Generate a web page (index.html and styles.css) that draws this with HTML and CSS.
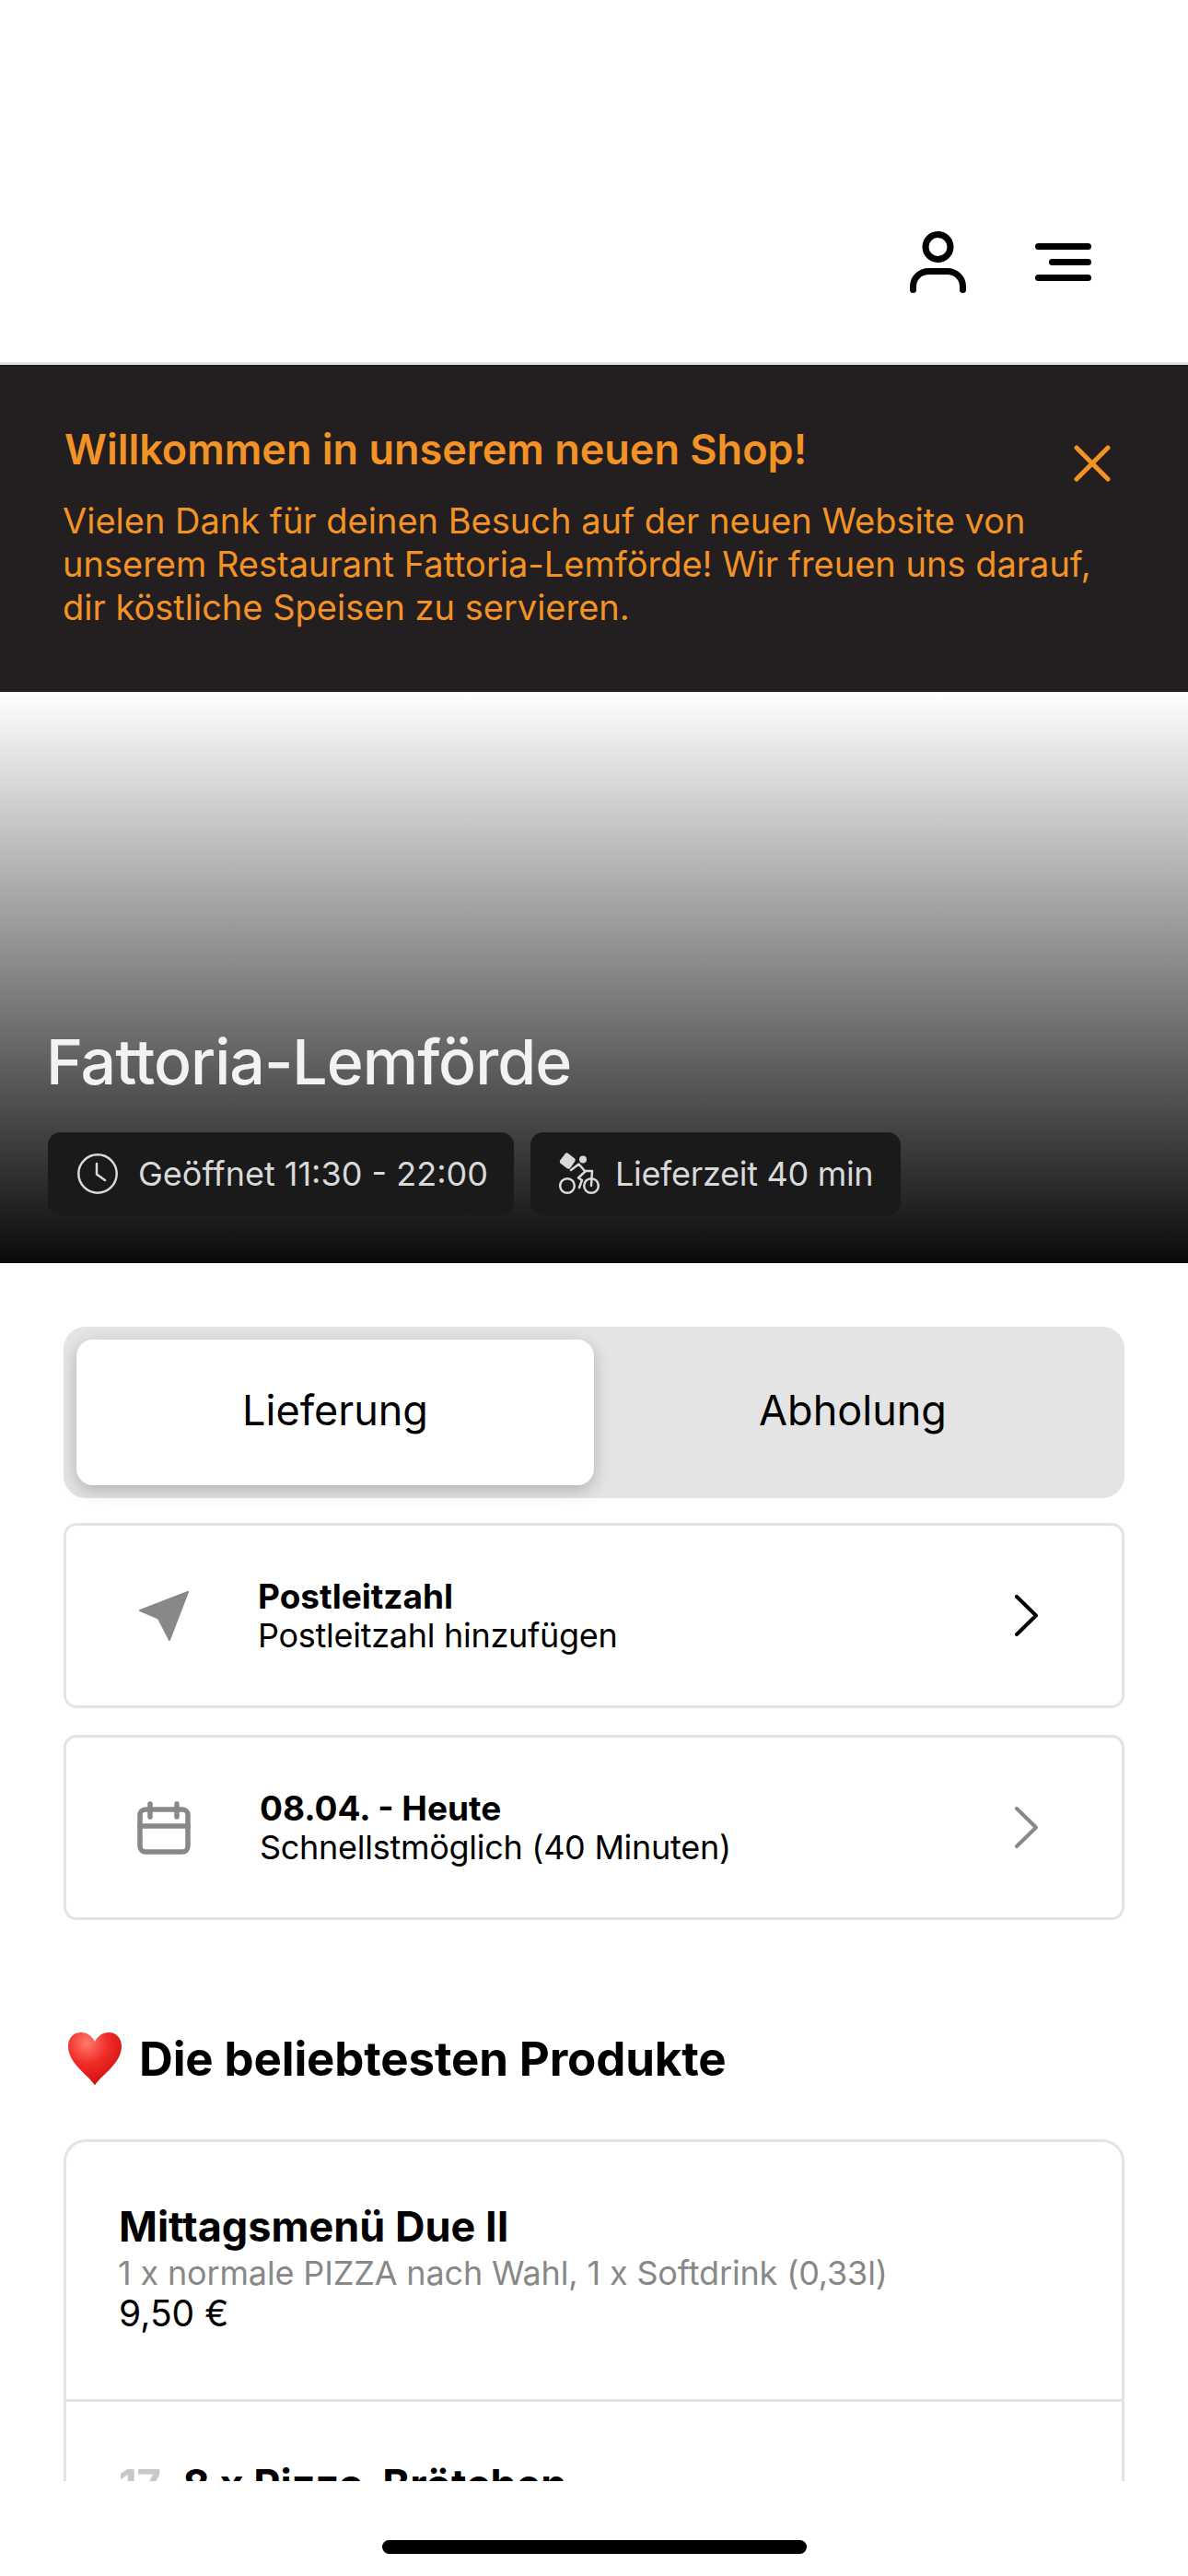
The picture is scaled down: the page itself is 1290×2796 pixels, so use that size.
FILE: index.html
```html
<!DOCTYPE html>
<html lang="de">
<head>
<meta charset="utf-8">
<title>Fattoria-Lemförde</title>
<link rel="stylesheet" href="styles.css">
</head>
<body>
<div class="page">
  <div class="viewport">
    <header class="topbar">
      <svg class="icon-user" viewBox="0 0 61 67" fill="none" stroke="#000" stroke-width="7" stroke-linecap="round"><circle cx="30.500" cy="17" r="13.500"/><path d="M3.500 63.500V60C3.500 50.600 11 43.500 20.500 43.500H40.500C50 43.500 57.500 50.600 57.500 60V63.500"/></svg>
      <svg class="icon-menu" viewBox="0 0 61 41" fill="none" stroke="#000" stroke-width="7" stroke-linecap="round"><path d="M3.500 3.500H57.500M18.500 20.500H57.500M3.500 37.500H57.500"/></svg>
    </header>
    <section class="notice">
      <div class="notice-head">
        <h2 class="notice-title">Willkommen in unserem neuen Shop!</h2>
        <svg class="icon-close" viewBox="0 0 40 40" fill="none" stroke="#f39325" stroke-width="5" stroke-linecap="round"><path d="M3 3L37 37M37 3L3 37"/></svg>
      </div>
      <p class="notice-body">Vielen Dank für deinen Besuch auf der neuen Website von unserem Restaurant Fattoria-Lemförde! Wir freuen uns darauf, dir köstliche Speisen zu servieren.</p>
    </section>
    <section class="hero">
      <h1 class="hero-title">Fattoria-Lemförde</h1>
      <div class="pills">
        <div class="pill">
          <svg class="pill-icon" viewBox="0 0 44 44" fill="none" stroke="#d9d9d9" stroke-width="2.500" stroke-linecap="round"><circle cx="22" cy="22" r="20.700"/><path d="M21 11V22.500L30 29"/></svg>
          <span>Geöffnet 11:30 - 22:00</span>
        </div>
        <div class="pill pill-delivery">
          <svg class="pill-icon" viewBox="0 0 44 46" fill="none" stroke="#d9d9d9" stroke-width="2.500" stroke-linecap="round" stroke-linejoin="round"><path fill="#d9d9d9" stroke="none" d="M10 1L16.500 6C18 7 18 8.500 17 10L12.500 16.500C11.500 18 10 18 8.500 17L2 12C.5 11 .5 9.500 1.500 8L6.500 1.500C7.500 0 8.700 0 10 1Z"/><circle fill="#d9d9d9" stroke="none" cx="26" cy="7.500" r="4"/><circle cx="9" cy="36" r="7.800"/><circle cx="35" cy="36" r="7.800"/><path d="M13 19L21.500 12.500L28 20H36L35 36M29 20L21 27.500L25 30L22 38"/></svg>
          <span>Lieferzeit 40 min</span>
        </div>
      </div>
    </section>
    <main class="content">
      <div class="tabs">
        <div class="tab tab-active">Lieferung</div>
        <div class="tab">Abholung</div>
      </div>
      <div class="row-card row-zip">
        <svg class="row-icon" viewBox="0 0 54 54" fill="#888" stroke="#888" stroke-width="2" stroke-linejoin="round"><path d="M53 1L1 21L21 29.500L33 53Z"/></svg>
        <div class="row-text">
          <div class="row-title">Postleitzahl</div>
          <div class="row-sub">Postleitzahl hinzufügen</div>
        </div>
        <svg class="chevron" viewBox="0 0 25 45" fill="none" stroke="#000" stroke-width="4" stroke-linecap="round" stroke-linejoin="round"><path d="M2 2L23 22.500L2 43"/></svg>
      </div>
      <div class="row-card row-date">
        <svg class="row-icon" viewBox="0 0 58 58" fill="none" stroke="#888" stroke-width="5.500" stroke-linecap="round"><rect x="3" y="9" width="52" height="46" rx="6"/><path d="M3 27H55M14 3V17M43 3V17"/></svg>
        <div class="row-text">
          <div class="row-title">08.04. - Heute</div>
          <div class="row-sub">Schnellstmöglich (40 Minuten)</div>
        </div>
        <svg class="chevron" viewBox="0 0 25 45" fill="none" stroke="#888" stroke-width="4" stroke-linecap="round" stroke-linejoin="round"><path d="M2 2L23 22.500L2 43"/></svg>
      </div>
      <h2 class="section-title">
        <svg class="heart" viewBox="0 0 60 58"><defs><radialGradient id="heartFill" cx=".35" cy=".2" r=".9"><stop offset="0" stop-color="#ff7a6e"/><stop offset=".45" stop-color="#ef2b25"/><stop offset="1" stop-color="#c90a0a"/></radialGradient></defs><path fill="url(#heartFill)" d="M30 57.500C24 47 1 34 1 15C1 6 7 0 15 0C21.500 0 27 4 30 10C33 4 38.500 0 45 0C53 0 59 6 59 15C59 34 36 47 30 57.500Z"/></svg>
        <span>Die beliebtesten Produkte</span>
      </h2>
      <div class="products">
        <article class="product">
          <h3 class="product-name">Mittagsmenü Due II</h3>
          <p class="product-desc">1 x normale PIZZA nach Wahl, 1 x Softdrink (0,33l)</p>
          <p class="product-price">9,50 €</p>
        </article>
        <article class="product">
          <h3 class="product-name"><span class="product-no">17</span>8 x Pizza-Brötchen</h3>
        </article>
      </div>
    </main>
  </div>
  <footer class="home-area"><div class="home-bar"></div></footer>
</div>
</body>
</html>
```
FILE: styles.css
```css
* { box-sizing: border-box; }
html, body { margin: 0; padding: 0; background: #fff; }
body { font-family: Inter, "Noto Sans", sans-serif; color: #000; }
h1, h2, h3, p { margin: 0; }
.page { width: 1290px; height: 2796px; display: flex; flex-direction: column; overflow: hidden; }
.viewport { height: 2693px; overflow: hidden; flex: none; }
.home-area { flex: 1; display: flex; justify-content: center; padding-top: 64px; background: #fff; }
.home-bar { width: 461px; height: 15px; border-radius: 8px; background: #000; }

.topbar { height: 396px; border-bottom: 3px solid #e4e4e4; display: flex; align-items: flex-start; justify-content: flex-end; gap: 75px; padding: 251px 105px 0 0; background: #fff; }
.icon-user { width: 61px; height: 67px; }
.icon-menu { width: 61px; height: 41px; margin-top: 13px; }

.notice { height: 355px; background: #231f20; color: #f39325; padding: 66px 84px 0 68px; }
.notice-head { display: flex; justify-content: space-between; align-items: flex-start; }
.notice-title { font-size: 45px; line-height: 52px; font-weight: 600; margin-left: 2px; }
.notice-body { width: 1135px; font-size: 38px; line-height: 47px; font-weight: 400; margin-top: 19px; }
.icon-close { width: 40px; height: 40px; margin-top: 21px; flex: none; }

.hero { height: 620px; background: linear-gradient(180deg, #fff 0%, #0a0a0a 100%); padding: 360px 0 0 50px; }
.hero-title { font-size: 68px; line-height: 82px; font-weight: 500; color: #f2f2f2; letter-spacing: -1px; }
.pills { display: flex; gap: 18px; margin: 36px 0 0 2px; }
.pill { height: 90px; background: #1a1a1a; border-radius: 14px; display: flex; align-items: center; gap: 22px; padding: 0 28px 0 32px; color: #d9d9d9; font-size: 36px; }
.pill-delivery { gap: 17px; padding: 0 30px 0 31px; letter-spacing: -.3px; }
.pill-icon { width: 44px; height: 44px; flex: none; }
.pill-delivery .pill-icon { height: 46px; }

.content { padding: 69px 69px 0; }
.tabs { height: 186px; background: #e4e4e4; border-radius: 24px; padding: 14px; display: flex; }
.tab { flex: 1; display: flex; align-items: center; justify-content: center; font-size: 45px; padding-bottom: 5px; border-radius: 18px; }
.tab-active { background: #fff; box-shadow: 0 6px 18px rgba(0,0,0,.22); }
.row-card { height: 201px; margin-top: 27px; border: 3px solid #e4e4e4; border-radius: 14px; display: flex; align-items: center; }
.row-date { margin-top: 29px; }
.row-icon { width: 54px; height: 54px; flex: none; margin-left: 79px; }
.row-text { flex: 1; margin-left: 75px; padding-top: 1px; }
.row-date .row-icon { width: 58px; height: 58px; margin-left: 77px; }
.row-date .row-text { margin-left: 75px; }
.row-title { font-size: 37px; line-height: 43px; font-weight: 700; }
.row-sub { font-size: 36px; line-height: 43px; letter-spacing: -.28px; }
.chevron { width: 25px; height: 45px; flex: none; margin-right: 91px; }

.section-title { display: flex; align-items: center; gap: 18px; margin-top: 121px; margin-left: 4px; font-size: 51px; line-height: 60px; font-weight: 700; letter-spacing: -.15px; }
.heart { width: 60px; height: 58px; flex: none; }
.products { margin-top: 57px; border: 3px solid #e4e4e4; border-radius: 24px; }
.product { padding: 66px 57px 0; height: 279px; }
.product + .product { border-top: 3px solid #e4e4e4; padding-top: 64px; }
.product-name { font-size: 45px; line-height: 52px; font-weight: 700; }
.product-desc { font-size: 36px; line-height: 44px; color: #888; margin-top: 2px; margin-left: -1px; letter-spacing: -.15px; }
.product-price { font-size: 39px; line-height: 44px; margin-top: 0; }
.product-no { color: #c8c8c8; margin-right: 24px; }
```
